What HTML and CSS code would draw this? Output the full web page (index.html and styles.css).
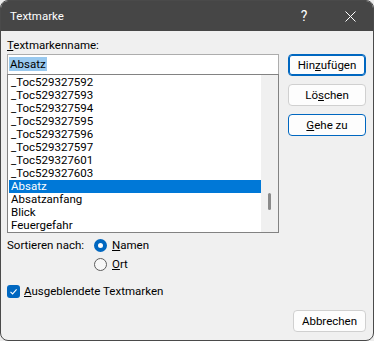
FILE: index.html
```html
<!DOCTYPE html>
<html lang="de">
<head>
    <meta charset="UTF-8">
    <meta name="viewport" content="width=device-width, initial-scale=1.0">
    <title>Textmarke</title>
    <link rel="stylesheet" href="styles.css">
</head>
<body>
    <div class="window">
        <div class="titlebar">
            <span class="title">Textmarke</span>
            <div class="title-buttons">
                <span class="title-btn help">?</span>
                <span class="title-btn close">
                    <svg width="11" height="11" viewBox="0 0 11 11">
                        <path d="M0.5 0.5 L10.5 10.5 M10.5 0.5 L0.5 10.5" stroke="#ffffff" stroke-width="1" fill="none"/>
                    </svg>
                </span>
            </div>
        </div>

        <div class="content">
            <div class="main">
                <div class="left">
                    <label class="field-label"><u>T</u>extmarkenname:</label>
                    <div class="name-input"><span class="sel-text">Absatz</span></div>
                    <div class="list">
                        <div class="rows">
                            <div class="row">_Toc529327592</div>
                            <div class="row">_Toc529327593</div>
                            <div class="row">_Toc529327594</div>
                            <div class="row">_Toc529327595</div>
                            <div class="row">_Toc529327596</div>
                            <div class="row">_Toc529327597</div>
                            <div class="row">_Toc529327601</div>
                            <div class="row">_Toc529327603</div>
                            <div class="row selected">Absatz</div>
                            <div class="row">Absatzanfang</div>
                            <div class="row">Blick</div>
                            <div class="row">Feuergefahr</div>
                        </div>
                        <div class="scrollbar">
                            <div class="thumb" style="margin-top: 118px;"></div>
                        </div>
                    </div>
                </div>
                <div class="right">
                    <button class="btn primary">Hin<u>z</u>ufügen</button>
                    <button class="btn">Lö<u>s</u>chen</button>
                    <button class="btn accent"><u>G</u>ehe zu</button>
                </div>
            </div>

            <div class="sort-row">
                <span class="sort-label">Sortieren nach:</span>
                <div class="radios">
                    <div class="option">
                        <span class="radio checked"></span>
                        <span><u>N</u>amen</span>
                    </div>
                    <div class="option">
                        <span class="radio"></span>
                        <span><u>O</u>rt</span>
                    </div>
                </div>
            </div>

            <div class="check-row">
                <span class="checkbox">
                    <svg width="13" height="13" viewBox="0 0 13 13">
                        <path d="M3.5 6.8 L5.6 8.9 L9.6 4.4" stroke="#ffffff" stroke-width="1.1" fill="none"/>
                    </svg>
                </span>
                <span><u>A</u>usgeblendete Textmarken</span>
            </div>

            <div class="footer">
                <button class="btn cancel">Abbrechen</button>
            </div>
        </div>
    </div>
</body>
</html>
```

FILE: styles.css
```css
body {
    margin: 0;
    padding: 0;
    background-color: #ececec;
    font-family: Roboto, 'Liberation Sans', sans-serif;
    font-size: 11.5px;
    color: #000;
}
u {
    text-decoration-thickness: 1px;
    text-underline-offset: 1px;
}
.window {
    width: 374px;
    height: 341px;
    box-sizing: border-box;
    border: 1px solid #4a4a4a;
    border-radius: 8px;
    overflow: hidden;
    background-color: #f0f0f0;
    display: flex;
    flex-direction: column;
}
.titlebar {
    height: 30px;
    background-color: #464646;
    color: #ffffff;
    display: flex;
    align-items: center;
    justify-content: space-between;
    flex-shrink: 0;
}
.title {
    padding-left: 9px;
}
.title-buttons {
    display: flex;
    height: 100%;
}
.title-btn {
    width: 46px;
    height: 100%;
    display: flex;
    align-items: center;
    justify-content: center;
}
.help {
    font-size: 14px;
}
.content {
    padding: 8px 7px 8px 6px;
    flex: 1;
}
.main {
    display: grid;
    grid-template-columns: 272px 78px;
    column-gap: 9px;
}
.field-label {
    display: block;
    line-height: 13px;
    margin-bottom: 2px;
}
.name-input {
    height: 20px;
    box-sizing: border-box;
    border: 1px solid #adadad;
    border-bottom: none;
    background-color: #ffffff;
    padding: 2px 1px 0;
    line-height: 15px;
}
.sel-text {
    background-color: #99c9ef;
    padding: 0 1px;
}
.list {
    display: flex;
    border: 1px solid #828282;
    background-color: #ffffff;
    padding: 1px 0 0 1px;
    height: 159px;
    box-sizing: border-box;
}
.rows {
    width: 252px;
}
.row {
    height: 13px;
    line-height: 13px;
    padding-left: 2px;
    white-space: nowrap;
}
.row.selected {
    background-color: #0078d7;
    color: #ffffff;
}
.scrollbar {
    width: 17px;
    margin-top: -1px;
    background-color: #f0f0f0;
}
.thumb {
    width: 3px;
    height: 17px;
    margin-left: 7px;
    border-radius: 2px;
    background-color: #8a8a8a;
}
.right {
    display: flex;
    flex-direction: column;
    gap: 8px;
    padding-top: 15px;
}
.btn {
    height: 22px;
    padding: 0;
    font-family: inherit;
    font-size: 11.5px;
    color: #000;
    background-color: #fdfdfd;
    border: 1px solid #d0d0d0;
    border-radius: 4px;
}
.btn.primary {
    border-color: #0067c0;
    box-shadow: inset 0 0 0 1px #0067c0;
}
.btn.accent {
    border-color: #0067c0;
}
.sort-row {
    display: flex;
    margin-top: 4px;
}
.sort-label {
    width: 87px;
    flex-shrink: 0;
    line-height: 16px;
}
.radios {
    display: flex;
    flex-direction: column;
    gap: 3px;
}
.option {
    display: flex;
    align-items: center;
    gap: 5px;
    height: 16px;
}
.radio {
    width: 13px;
    height: 13px;
    box-sizing: border-box;
    border-radius: 50%;
    border: 1px solid #5d5d5d;
    background-color: #f7f7f7;
}
.radio.checked {
    border: 4px solid #0067c0;
    background-color: #ffffff;
}
.check-row {
    display: flex;
    align-items: center;
    gap: 4px;
    height: 16px;
    margin-top: 11px;
}
.checkbox {
    width: 13px;
    height: 13px;
    border-radius: 3px;
    background-color: #0067c0;
    display: flex;
}
.footer {
    display: flex;
    justify-content: flex-end;
    margin-top: 11px;
}
.btn.cancel {
    width: 73px;
}
```
